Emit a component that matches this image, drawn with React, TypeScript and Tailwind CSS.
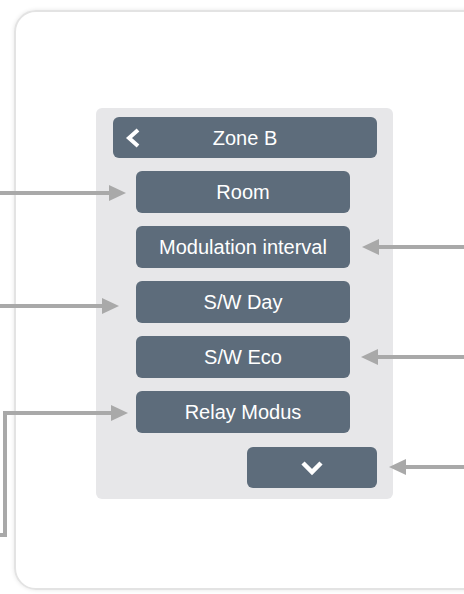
import React from "react";

const items = ["Room", "Modulation interval", "S/W Day", "S/W Eco", "Relay Modus"];

function Arrow({ d, tip, dir }: { d: string; tip: [number, number]; dir: "left" | "right" }) {
  const [x, y] = tip;
  const pts =
    dir === "right"
      ? `${x},${y} ${x - 17},${y - 8} ${x - 17},${y + 8}`
      : `${x},${y} ${x + 17},${y - 8} ${x + 17},${y + 8}`;
  return (
    <g>
      <path d={d} fill="none" stroke="#a9a9a9" strokeWidth={4} />
      <polygon points={pts} fill="#a9a9a9" />
    </g>
  );
}

export default function App() {
  return (
    <div
      className="relative w-[464px] h-[594px] overflow-hidden bg-white"
      style={{ fontFamily: '"Liberation Sans", Arial, sans-serif' }}
    >
      <div className="ml-[14px] mt-[10px] w-[480px] h-[580px] rounded-[22px] border-2 border-[#e3e3e3] shadow-[0_0_4px_rgba(0,0,0,0.1)] pl-[80px] pt-[96px]">
        <div className="w-[297px] h-[391px] rounded-[6px] bg-[#e7e7e9] pt-[9px] pl-[17px] pr-[16px] flex flex-col">
          <div className="relative h-[41px] w-full rounded-[6px] bg-[#5d6c7b] flex items-center justify-center text-white text-[20px]">
            <svg className="absolute left-[12px] top-[11px]" width="16" height="20" viewBox="0 0 16 20">
              <polyline points="13,2 4,10 13,18" fill="none" stroke="white" strokeWidth={4} strokeLinejoin="miter" strokeLinecap="butt" />
            </svg>
            <span>Zone B</span>
          </div>
          <div className="ml-[23px] mt-[13px] w-[214px] flex flex-col gap-[13px]">
            {items.map((t) => (
              <div
                key={t}
                className="h-[42px] rounded-[6px] bg-[#5d6c7b] flex items-center justify-center text-white text-[20px]"
              >
                {t}
              </div>
            ))}
          </div>
          <div className="self-end mt-[14px] w-[130px] h-[41px] rounded-[6px] bg-[#5d6c7b] flex items-center justify-center">
            <svg width="24" height="16" viewBox="0 0 24 16">
              <polyline points="3,3 12,12 21,3" fill="none" stroke="white" strokeWidth={4.5} />
            </svg>
          </div>
        </div>
      </div>
      <svg className="absolute left-0 top-0 pointer-events-none" width="464" height="594" viewBox="0 0 464 594">
        <Arrow d="M0 193 H110" tip={[126, 193]} dir="right" />
        <Arrow d="M0 306 H103" tip={[119, 306]} dir="right" />
        <Arrow d="M0 535 H5 V413 H112" tip={[128, 413]} dir="right" />
        <Arrow d="M464 247 H378" tip={[362, 247]} dir="left" />
        <Arrow d="M464 357 H377" tip={[361, 357]} dir="left" />
        <Arrow d="M464 467 H405" tip={[389, 467]} dir="left" />
      </svg>
    </div>
  );
}
